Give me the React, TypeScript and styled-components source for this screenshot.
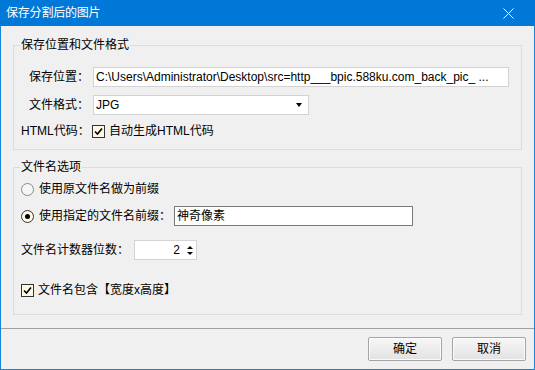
import React from "react";
import styled, { createGlobalStyle } from "styled-components";

const Global = createGlobalStyle`
  html, body { margin: 0; padding: 0; background: #f0f0f0; }
  * { box-sizing: border-box; }
  body {
    font-family: "Liberation Sans", "Noto Sans CJK SC", sans-serif;
    font-size: 12px;
    color: #000;
  }
`;

const Window = styled.div`
  width: 535px;
  height: 370px;
  display: flex;
  flex-direction: column;
  background: #f0f0f0;
  border: 1px solid #1883d7;
  border-top: none;
`;

const TitleBar = styled.div`
  height: 26px;
  margin: 0 -1px;
  background: #0078d7;
  color: #fff;
  display: flex;
  align-items: center;
  justify-content: space-between;
  padding: 0 21px 0 6px;
  line-height: 16px;
  flex-shrink: 0;
`;

const TitleText = styled.span`
  font-size: 12px;
  letter-spacing: -0.2px;
`;

const Body = styled.div`
  flex: 1;
  display: flex;
  flex-direction: column;
  padding-top: 12px;
`;

const Group = styled.fieldset<{ $h: number; $mt?: number }>`
  margin: ${(p) => p.$mt ?? 0}px 12px 0 12px;
  padding: 0;
  border: 1px solid #dcdcdc;
  height: ${(p) => p.$h}px;
  min-width: 0;
`;

const Legend = styled.legend`
  margin-left: 6px;
  padding: 0 1px;
  height: 14px;
  line-height: 14px;
  font-size: 12px;
`;

const Content = styled.div<{ $pt: number }>`
  padding: ${(p) => p.$pt}px 12px 0 7px;
  display: flex;
  flex-direction: column;
`;

const Row = styled.div<{ $mt?: number }>`
  display: flex;
  align-items: center;
  height: 20px;
  margin-top: ${(p) => p.$mt ?? 0}px;
`;

const Label = styled.span<{ $w?: number; $gap?: number }>`
  width: ${(p) => (p.$w ? `${p.$w}px` : "auto")};
  text-align: right;
  margin-right: ${(p) => p.$gap ?? 4}px;
  white-space: nowrap;
  line-height: 16px;
`;

const TextBox = styled.div<{ $w: number; $dark?: boolean }>`
  width: ${(p) => p.$w}px;
  height: 20px;
  background: #fff;
  border: 1px solid ${(p) => (p.$dark ? "#7a7a7a" : "#d3d3d3")};
  padding: 0 2px;
  display: flex;
  align-items: center;
  line-height: 16px;
  white-space: nowrap;
  overflow: hidden;
`;

const Select = styled(TextBox)`
  justify-content: space-between;
  padding-right: 6px;
`;

const Caret = styled.span`
  width: 0;
  height: 0;
  border-left: 3.5px solid transparent;
  border-right: 3.5px solid transparent;
  border-top: 4px solid #000;
`;

const Spin = styled(TextBox)`
  justify-content: flex-end;
  padding-right: 3px;
`;

const SpinArrows = styled.span`
  display: flex;
  flex-direction: column;
  gap: 3px;
  margin-left: 7px;
`;

const Tri = styled.span<{ $up?: boolean }>`
  width: 0;
  height: 0;
  border-left: 3px solid transparent;
  border-right: 3px solid transparent;
  ${(p) => (p.$up ? "border-bottom: 3px solid #000;" : "border-top: 3px solid #000;")}
`;

const CheckBox = styled.span<{ $ml?: number }>`
  width: 13px;
  height: 13px;
  border: 1px solid #333;
  background: #fdf8e4;
  display: inline-flex;
  align-items: center;
  justify-content: center;
  margin-left: ${(p) => p.$ml ?? 0}px;
  margin-right: 4px;
  flex-shrink: 0;
`;

const Radio = styled.span<{ $on?: boolean }>`
  width: 13px;
  height: 13px;
  border-radius: 50%;
  border: 1px solid ${(p) => (p.$on ? "#333" : "#8a8a8a")};
  background: ${(p) => (p.$on ? "#fdf8e4" : "#f6f6f6")};
  display: inline-flex;
  align-items: center;
  justify-content: center;
  margin-right: 5px;
  flex-shrink: 0;
`;

const Dot = styled.span`
  width: 5px;
  height: 5px;
  border-radius: 50%;
  background: #000;
`;

const Text = styled.span`
  line-height: 16px;
  white-space: nowrap;
`;

const Footer = styled.div`
  height: 41px;
  border-top: 1px solid #a0a0a0;
  display: flex;
  justify-content: flex-end;
  align-items: flex-start;
  gap: 10px;
  padding: 8px 8px 0 0;
  flex-shrink: 0;
`;

const Button = styled.button`
  width: 74px;
  height: 24px;
  border: 1px solid #a5a5a5;
  border-radius: 2px;
  background: linear-gradient(#f7f7f7, #e2e2e2);
  box-shadow: inset 0 0 0 1px #fbfbfb;
  font-family: "Liberation Sans", "Noto Sans CJK SC", sans-serif;
  font-size: 12px;
  color: #000;
  padding: 0;
  line-height: 16px;
`;

const Check = () => (
  <svg width="9" height="9" viewBox="0 0 9 9">
    <path d="M1 4.5 L3.5 7 L8 1.5" fill="none" stroke="#000" strokeWidth="1.6" />
  </svg>
);

const CloseIcon = () => (
  <svg width="11" height="11" viewBox="0 0 11 11">
    <path d="M0.5 0.5 L10.5 10.5 M10.5 0.5 L0.5 10.5" stroke="#fff" strokeWidth="1" />
  </svg>
);

export default function App() {
  return (
    <>
      <Global />
      <Window>
        <TitleBar>
          <TitleText>保存分割后的图片</TitleText>
          <CloseIcon />
        </TitleBar>
        <Body>
          <Group $h={112}>
            <Legend>保存位置和文件格式</Legend>
            <Content $pt={15}>
              <Row>
                <Label $w={68}>保存位置：</Label>
                <TextBox $w={416}>
                  C:\Users\Administrator\Desktop\src=http___bpic.588ku.com_back_pic_ ...
                </TextBox>
              </Row>
              <Row $mt={8}>
                <Label $w={68}>文件格式：</Label>
                <Select $w={216}>
                  <span>JPG</span>
                  <Caret />
                </Select>
              </Row>
              <Row $mt={6}>
                <Label $w={68}>HTML代码：</Label>
                <CheckBox $ml={-1}>
                  <Check />
                </CheckBox>
                <Text>自动生成HTML代码</Text>
              </Row>
            </Content>
          </Group>
          <Group $h={155} $mt={10}>
            <Legend>文件名选项</Legend>
            <Content $pt={5}>
              <Row>
                <Radio />
                <Text>使用原文件名做为前缀</Text>
              </Row>
              <Row $mt={7}>
                <Radio $on>
                  <Dot />
                </Radio>
                <Label $gap={3}>使用指定的文件名前缀：</Label>
                <TextBox $w={239} $dark>
                  神奇像素
                </TextBox>
              </Row>
              <Row $mt={14}>
                <Label $gap={5}>文件名计数器位数：</Label>
                <Spin $w={63}>
                  <span>2</span>
                  <SpinArrows>
                    <Tri $up />
                    <Tri />
                  </SpinArrows>
                </Spin>
              </Row>
              <Row $mt={20}>
                <CheckBox>
                  <Check />
                </CheckBox>
                <Text>文件名包含【宽度x高度】</Text>
              </Row>
            </Content>
          </Group>
        </Body>
        <Footer>
          <Button>确定</Button>
          <Button>取消</Button>
        </Footer>
      </Window>
    </>
  );
}
